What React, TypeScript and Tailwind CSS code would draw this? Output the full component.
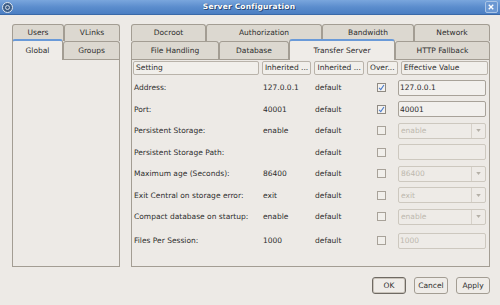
import React from 'react'

const font = { fontFamily: '"DejaVu Sans", "Liberation Sans", sans-serif' }

type Row = {
  label: string
  inherited: string
  over: boolean
  kind: 'text' | 'select'
  value: string
}

const ROWS: Row[] = [
  { label: 'Address:', inherited: '127.0.0.1', over: true, kind: 'text', value: '127.0.0.1' },
  { label: 'Port:', inherited: '40001', over: true, kind: 'text', value: '40001' },
  { label: 'Persistent Storage:', inherited: 'enable', over: false, kind: 'select', value: 'enable' },
  { label: 'Persistent Storage Path:', inherited: '', over: false, kind: 'text', value: '' },
  { label: 'Maximum age (Seconds):', inherited: '86400', over: false, kind: 'select', value: '86400' },
  { label: 'Exit Central on storage error:', inherited: 'exit', over: false, kind: 'select', value: 'exit' },
  { label: 'Compact database on startup:', inherited: 'enable', over: false, kind: 'select', value: 'enable' },
  { label: 'Files Per Session:', inherited: '1000', over: false, kind: 'text', value: '1000' },
]

const tabBase =
  'flex items-center justify-center rounded-t-[3px] border border-b-0 border-[#a39d93] text-[7.5px] text-[#2e2e2e]'
const tabOff = `${tabBase} bg-[#dcd8d0]`

function Tab({ label, w, selected }: { label: string; w: string; selected?: boolean }) {
  if (selected) {
    return (
      <div
        className={`${tabBase} ${w} relative z-10 -mt-[2px] h-[calc(100%+3px)] bg-[#efece8] border-t-[2px] border-t-[#6a9ad8]`}
      >
        {label}
      </div>
    )
  }
  return <div className={`${tabOff} ${w} h-full`}>{label}</div>
}

function Check({ on }: { on: boolean }) {
  return (
    <div
      className={`flex h-[9px] w-[9px] items-center justify-center border ${
        on ? 'border-[#8f8a82] bg-[#f4f2ef]' : 'border-[#a8a299] bg-[#f1efeb]'
      }`}
    >
      {on && (
        <svg viewBox="0 0 10 10" className="h-[7px] w-[7px]">
          <path d="M1.5 5.5 L4 8 L8.5 1.5" fill="none" stroke="#4a7ccc" strokeWidth="1.6" />
        </svg>
      )}
    </div>
  )
}

function Field({ row }: { row: Row }) {
  const enabled = row.over
  if (row.kind === 'select') {
    return (
      <div className="flex h-[16px] w-[88px] items-stretch rounded-[2px] border border-[#cdc8bf] bg-[#eeebe7]">
        <div className="flex flex-1 items-center pl-[2px] text-[7.5px] text-[#bdb8ae]">{row.value}</div>
        <div className="flex w-[14px] items-center justify-center border-l border-[#d6d1c9]">
          <svg viewBox="0 0 6 4" className="h-[3px] w-[5px]">
            <path d="M0 0 L6 0 L3 4 Z" fill="#b5b0a7" />
          </svg>
        </div>
      </div>
    )
  }
  return (
    <div
      className={`flex h-[16px] w-[88px] items-center rounded-[2px] border pl-[1px] text-[7.5px] ${
        enabled
          ? 'border-[#a8a299] bg-[#f2f0ed] text-[#2e2e2e]'
          : 'border-[#cdc8bf] bg-[#eeebe7] text-[#bdb8ae]'
      }`}
    >
      {row.value}
    </div>
  )
}

const headCell =
  'flex h-[14px] items-center rounded-[2px] border border-[#b9b3aa] bg-[#f1efeb] pl-[2px] text-[7.5px] text-[#2e2e2e] whitespace-nowrap overflow-hidden'

export default function App() {
  return (
    <div style={font} className="flex h-[305px] w-[500px] flex-col overflow-hidden bg-[#edeae6] text-[#2e2e2e]">
      {/* title bar */}
      <div className="flex h-[15px] items-center justify-between border-b border-[#3a69a8] bg-gradient-to-b from-[#7aa6dd] via-[#5b8dcd] to-[#4b7ec2] px-[2px]">
        <div className="flex h-[11px] w-[11px] items-center justify-center rounded-full border border-[#dfe7f1] bg-[#3e5f88]">
          <div className="h-[5px] w-[5px] rounded-full border border-[#cfd9e6]" />
        </div>
        <div
          className="text-[7.5px] font-bold tracking-[0.2px] text-white"
          style={{ textShadow: '0 0 1px #2c4d7a, 1px 1px 0 #2c4d7a' }}
        >
          Server Configuration
        </div>
        <div className="flex h-[12px] w-[13px] items-center justify-center rounded-[2px] border border-[#a9c4e6] bg-[#6b98d3]">
          <svg viewBox="0 0 8 8" className="h-[6px] w-[6px]">
            <path d="M1 1 L7 7 M7 1 L1 7" stroke="white" strokeWidth="1.8" />
          </svg>
        </div>
      </div>

      <div className="flex flex-1 flex-col px-[10px] pl-[12px] pt-[9px]">
        <div className="flex h-[243px] gap-[11px]">
          {/* left panel */}
          <div className="flex w-[108px] flex-col">
            <div className="flex h-[17px]">
              <Tab label="Users" w="w-[52px]" />
              <Tab label="VLinks" w="w-[56px]" />
            </div>
            <div className="flex h-[18px]">
              <Tab label="Global" w="w-[51px]" selected />
              <Tab label="Groups" w="w-[57px]" />
            </div>
            <div className="flex-1 border border-[#a39d93] bg-[#edeae6]" />
          </div>

          {/* right panel */}
          <div className="flex w-[359px] flex-col">
            <div className="flex h-[17px]">
              <Tab label="Docroot" w="w-[75px]" />
              <Tab label="Authorization" w="w-[116px]" />
              <Tab label="Bandwidth" w="w-[92px]" />
              <Tab label="Network" w="w-[76px]" />
            </div>
            <div className="flex h-[18px]">
              <Tab label="File Handling" w="w-[88px]" />
              <Tab label="Database" w="w-[70px]" />
              <Tab label="Transfer Server" w="w-[106px]" selected />
              <Tab label="HTTP Fallback" w="w-[95px]" />
            </div>
            <div className="flex flex-1 flex-col border border-[#a39d93] bg-[#edeae6] px-[1px] pt-[1px]">
              <div className="flex gap-[3px]">
                <div className={`${headCell} w-[127px]`}>Setting</div>
                <div className={`${headCell} w-[50px]`}>Inherited ...</div>
                <div className={`${headCell} w-[50px]`}>Inherited ...</div>
                <div className={`${headCell} w-[31px]`}>Over...</div>
                <div className={`${headCell} w-[88px]`}>Effective Value</div>
              </div>
              <div className="flex flex-col pt-[2px]">
                {ROWS.map((r, i) => (
                  <div
                    key={r.label}
                    className={`flex items-center text-[7.5px] ${i === ROWS.length - 1 ? 'mt-[2px] h-[22px]' : 'h-[21.5px]'}`}
                  >
                    <div className="w-[130px] whitespace-nowrap pl-[1px]">{r.label}</div>
                    <div className="w-[52px] whitespace-nowrap">{r.inherited}</div>
                    <div className="w-[62px] whitespace-nowrap">default</div>
                    <div className="flex w[21px] w-[21px]">
                      <Check on={r.over} />
                    </div>
                    <Field row={r} />
                  </div>
                ))}
              </div>
            </div>
          </div>
        </div>

        {/* buttons */}
        <div className="flex justify-end gap-[8px] pt-[10px] pr-[0px]">
          {['OK', 'Cancel', 'Apply'].map((b) => (
            <div
              key={b}
              className={`flex h-[17px] items-center justify-center rounded-[3px] border bg-[#efece8] text-[7.5px] ${
                b === 'OK' ? 'w-[34px] border-[#6f6a63] shadow-[inset_0_0_0_1px_#c9c3ba]' : 'w-[34px] border-[#a39d93]'
              }`}
            >
              {b}
            </div>
          ))}
        </div>
      </div>
    </div>
  )
}
